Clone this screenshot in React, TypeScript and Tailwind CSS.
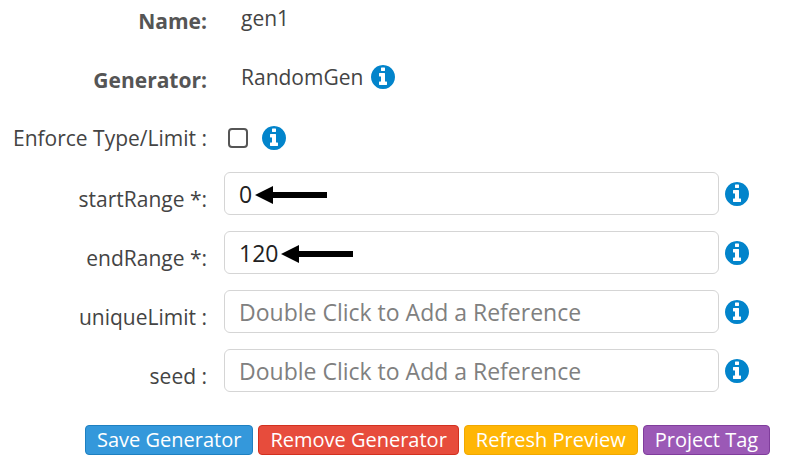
import type { ReactNode } from "react";

function InfoIcon() {
  return (
    <svg viewBox="128 128 1536 1536" className="size-6 shrink-0 fill-[#0284cb]" aria-hidden="true">
      <path d="M1152 1376v-160q0-14-9-23t-23-9h-96v-512q0-14-9-23t-23-9h-320q-14 0-23 9t-9 23v160q0 14 9 23t23 9h96v320h-96q-14 0-23 9t-9 23v160q0 14 9 23t23 9h448q14 0 23-9t9-23zm-128-896v-160q0-14-9-23t-23-9h-192q-14 0-23 9t-9 23v160q0 14 9 23t23 9h192q14 0 23-9t9-23zm640 416q0 209-103 385.5t-279.5 279.5-385.5 103-385.5-103-279.5-279.5-103-385.5 103-385.5 279.5-279.5 385.5-103 385.5 103 279.5 279.5 103 385.5z" />
    </svg>
  );
}

function Arrow({ className }: { className: string }) {
  return (
    <svg viewBox="0 0 72 18" className={`absolute top-[14px] h-[18px] w-[72px] ${className}`} aria-hidden="true">
      <path d="M0 9 18 0V6H72V12H18V18Z" fill="#000" />
    </svg>
  );
}

const labelClass = "w-52 shrink-0 pr-px text-right";

type FieldProps = {
  id: string;
  label: string;
  value?: string;
  children?: ReactNode;
};

function Field({ id, label, value, children }: FieldProps) {
  return (
    <div className="flex items-center">
      <label htmlFor={id} className={`${labelClass} pt-[10px]`}>
        {label}
      </label>
      <div className="relative ml-4 flex-1">
        <input
          id={id}
          type="text"
          defaultValue={value}
          placeholder="Double Click to Add a Reference"
          className="block h-[43px] w-full rounded-md border border-[#d5d5d5] bg-white px-[14px] text-[23px] text-[#222] placeholder:text-[#808080]"
        />
        {children}
      </div>
      <div className="ml-[6px]">
        <InfoIcon />
      </div>
    </div>
  );
}

const buttons = [
  { text: "Save Generator", color: "bg-[#3498db] border-[#1e80c1]" },
  { text: "Remove Generator", color: "bg-[#e74c3c] border-[#d2301f]" },
  { text: "Refresh Preview", color: "bg-[#ffb606] border-[#f0a800]" },
  { text: "Project Tag", color: "bg-[#9b59b6] border-[#803d9c]" },
];

export default function App() {
  return (
    <main className="bg-white pb-3 font-['Open_Sans',sans-serif] text-[21px] leading-7 text-[#444]">
      <form onSubmit={(e) => e.preventDefault()}>
        {/* Read only details */}
        <dl>
          <div className="flex h-[59px] items-start pt-1">
            <dt className={`${labelClass} pt-[3px] font-bold text-[#555]`}>Name:</dt>
            <dd className="ml-[33px]">gen1</dd>
          </div>
          <div className="flex h-[59px] items-start pt-1">
            <dt className={`${labelClass} pt-[3px] font-bold text-[#555]`}>Generator:</dt>
            <dd className="ml-[33px] flex items-center gap-2">
              RandomGen
              <InfoIcon />
            </dd>
          </div>
        </dl>

        <div className="flex h-[54px] items-start pt-[6px]">
          <label htmlFor="enforce" className={labelClass}>
            Enforce Type/Limit :
          </label>
          <div className="ml-5 flex h-7 items-center gap-[14px]">
            <input
              id="enforce"
              type="checkbox"
              className="size-5 appearance-none rounded border-2 border-[#555] bg-white checked:bg-[#0284cb]"
            />
            <InfoIcon />
          </div>
        </div>

        {/* Parameters */}
        <div className="flex flex-col gap-4 pr-[41px]">
          <Field id="startRange" label="startRange *:" value="0">
            <Arrow className="left-[31px]" />
          </Field>
          <Field id="endRange" label="endRange *:" value="120">
            <Arrow className="left-[57px]" />
          </Field>
          <Field id="uniqueLimit" label="uniqueLimit :" />
          <Field id="seed" label="seed :" />
        </div>

        <div className="mt-[33px] flex gap-[5px] pl-[85px]">
          {buttons.map((b) => (
            <button
              key={b.text}
              type="button"
              className={`h-[30px] rounded border px-[11px] text-[20px] leading-7 whitespace-nowrap text-white ${b.color}`}
            >
              {b.text}
            </button>
          ))}
        </div>
      </form>
    </main>
  );
}
